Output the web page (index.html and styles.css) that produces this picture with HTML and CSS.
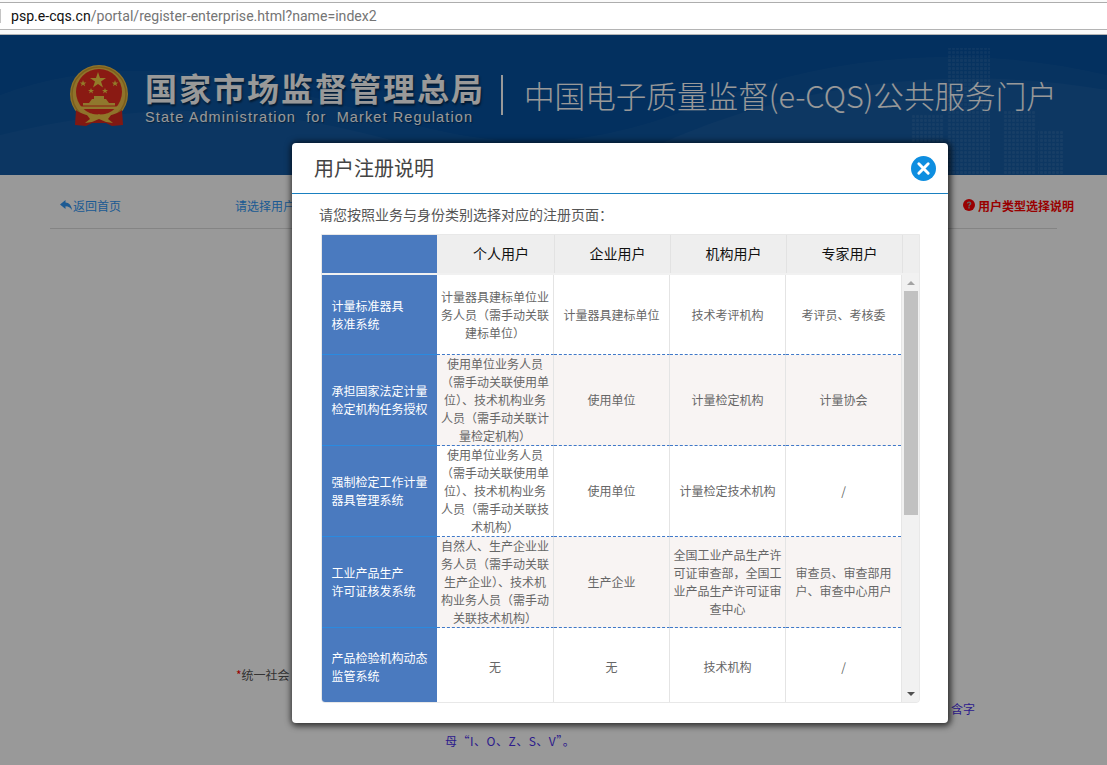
FILE: index.html
```html
<!DOCTYPE html>
<html lang="zh-CN">
<head>
<meta charset="utf-8">
<title>用户注册说明</title>
<link rel="stylesheet" href="styles.css">
</head>
<body>
<div class="page">
  <div class="browser-bar">
    <div class="address"><span class="host">psp.e-cqs.cn</span>/portal/register-enterprise.html?name=index2</div>
  </div>

  <header class="banner">
    <svg class="banner-art" viewBox="0 0 1107 140" preserveAspectRatio="none" aria-hidden="true">
      <defs>
        <pattern id="dots" width="4" height="4" patternUnits="userSpaceOnUse"><rect width="3" height="3" rx="1" fill="#fff"/></pattern>
      </defs>
      <path d="M0 60C120 15 240 40 360 75S560 125 700 70 980 10 1107 40V140H0Z" fill="#fff" opacity=".035"/>
      <path d="M600 140C720 70 900 20 1107 55V140Z" fill="#fff" opacity=".04"/>
      <path d="M0 100C160 60 300 70 470 130L500 140H0Z" fill="#fff" opacity=".03"/>
      <g fill="url(#dots)" opacity=".07">
        <rect x="947" y="13" width="43" height="127"/>
        <rect x="912" y="80" width="32" height="60"/>
        <rect x="1003" y="75" width="32" height="65"/>
        <rect x="1038" y="96" width="25" height="44"/>
      </g>
    </svg>
    <div class="brand">
      <svg class="emblem" viewBox="0 0 60 62" aria-hidden="true">
        <circle cx="30" cy="29" r="29" fill="#eec048"/>
        <circle cx="30" cy="29" r="27" fill="none" stroke="#cf9f30" stroke-width="1.500"/>
        <circle cx="30" cy="27" r="23" fill="#e62c20"/>
        <path d="M29 7l2 6h6l-5 3.600 2 6-5-3.700-5 3.700 2-6-5-3.600h6z" fill="#f5cf45"/>
        <path d="M14 15l.9 2.400h2.500l-2 1.500.8 2.400-2.200-1.500-2 1.500.7-2.400-2-1.500h2.500zM46 15l.9 2.400h2.500l-2 1.500.8 2.400-2.200-1.500-2 1.500.7-2.400-2-1.500h2.500zM22 23l.8 2h2.300l-1.800 1.300.7 2.200-2-1.400-1.900 1.400.7-2.200-1.800-1.300h2.200zM36 23l.8 2h2.300l-1.800 1.300.7 2.200-2-1.400-1.900 1.400.7-2.200-1.800-1.300h2.200z" fill="#f5cf45"/>
        <path d="M20 38l3-4h2v-3h10v3h2l3 4zM14 38h32v2.500H14zM11 41.500h38V44H11z" fill="#f1c94b"/>
        <path d="M7 45c6 5 14 6 23 6s17-1 23-6l1 15-11 1-6-3H23l-6 3-11-1z" fill="#d8281e"/>
        <path d="M18 50c4-3 8 1 12-1 4 2 8-2 12 1l-3 4 5 4-7-1-7-3-7 3-7 1 5-4z" fill="#f0c645"/>
      </svg>
      <div class="agency">
        <div class="agency-cn">国家市场监督管理总局</div>
        <div class="agency-en">State Administration&nbsp; for&nbsp; Market Regulation</div>
      </div>
      <div class="brand-rule"></div>
      <div class="portal-name">中国电子质量监督(e-CQS)公共服务门户</div>
    </div>
  </header>

  <nav class="subnav">
    <a class="back">
      <svg class="back-icon" viewBox="0 0 12 12" aria-hidden="true"><path d="M0 5.500L5.500 1v2.600C9 3.800 11.500 6.500 12 11 10.500 8.500 8.500 7.300 5.500 7.200V10z"/></svg>
      <span>返回首页</span>
    </a>
    <span class="choose">请选择用户</span>
    <a class="help">
      <svg class="help-icon" viewBox="0 0 12 12" aria-hidden="true"><circle cx="6" cy="6" r="6" fill="#f00"/><path d="M3.800 4.600C3.900 3.300 4.800 2.600 6.100 2.600c1.300 0 2.200.8 2.200 1.900 0 1.500-1.600 1.500-1.600 2.900H5.300C5.300 5.500 6.800 5.300 6.800 4.500c0-.4-.3-.7-.8-.7-.5 0-.8.3-.9.8zM5.300 8.100h1.400v1.300H5.300z" fill="#aaa"/></svg>
      <span>用户类型选择说明</span>
    </a>
  </nav>

  <section class="form-area">
    <div class="field-label"><span class="req">*</span>统一社会</div>
    <p class="hint">
      <span class="hint-first">含字</span>
      <span class="hint-second">母“I、O、Z、S、V”。</span>
    </p>
  </section>

  <div class="overlay">
    <div class="modal" role="dialog" aria-label="用户注册说明">
      <div class="modal-head">
        <h2 class="modal-title">用户注册说明</h2>
        <button class="close" aria-label="关闭">
          <svg viewBox="0 0 24 24" aria-hidden="true"><path d="M7.500 7.500l9 9M16.500 7.500l-9 9" stroke="#fff" stroke-width="2.800" stroke-linecap="round"/></svg>
        </button>
      </div>
      <div class="modal-body">
        <p class="intro">请您按照业务与身份类别选择对应的注册页面：</p>
        <div class="table-box">
          <table class="head-table">
            <thead>
              <tr>
                <th class="h-sys"></th>
                <th class="h-a">个人用户</th>
                <th class="h-b">企业用户</th>
                <th class="h-b">机构用户</th>
                <th class="h-b">专家用户</th>
                <th class="h-gap"></th>
              </tr>
            </thead>
          </table>
          <div class="body-row">
            <div class="body-clip">
              <table class="body-table">
                <tbody>
                  <tr class="r-short">
                    <th class="sys">计量标准器具<br>核准系统</th>
                    <td class="c-a">计量器具建标单位业务人员（需手动关联建标单位）</td>
                    <td class="c-b">计量器具建标单位</td>
                    <td class="c-b">技术考评机构</td>
                    <td class="c-e">考评员、考核委</td>
                  </tr>
                  <tr class="r-tint">
                    <th class="sys">承担国家法定计量<br>检定机构任务授权</th>
                    <td class="c-a">使用单位业务人员（需手动关联使用单位）、技术机构业务人员（需手动关联计量检定机构）</td>
                    <td class="c-b">使用单位</td>
                    <td class="c-b">计量检定机构</td>
                    <td class="c-e">计量协会</td>
                  </tr>
                  <tr>
                    <th class="sys">强制检定工作计量<br>器具管理系统</th>
                    <td class="c-a">使用单位业务人员（需手动关联使用单位）、技术机构业务人员（需手动关联技术机构）</td>
                    <td class="c-b">使用单位</td>
                    <td class="c-b">计量检定技术机构</td>
                    <td class="c-e">/</td>
                  </tr>
                  <tr class="r-tint">
                    <th class="sys">工业产品生产<br>许可证核发系统</th>
                    <td class="c-a">自然人、生产企业业务人员（需手动关联生产企业）、技术机构业务人员（需手动关联技术机构）</td>
                    <td class="c-b">生产企业</td>
                    <td class="c-b">全国工业产品生产许可证审查部，全国工业产品生产许可证审查中心</td>
                    <td class="c-e">审查员、审查部用户、审查中心用户</td>
                  </tr>
                  <tr class="r-last">
                    <th class="sys">产品检验机构动态<br>监管系统</th>
                    <td class="c-a">无</td>
                    <td class="c-b">无</td>
                    <td class="c-b">技术机构</td>
                    <td class="c-e">/</td>
                  </tr>
                </tbody>
              </table>
            </div>
            <div class="scrollbar" aria-hidden="true">
              <div class="sb-btn"><span class="arrow-up"></span></div>
              <div class="sb-track"><div class="sb-thumb"></div></div>
              <div class="sb-btn"><span class="arrow-down"></span></div>
            </div>
          </div>
        </div>
      </div>
    </div>
  </div>
</div>
</body>
</html>
```

FILE: styles.css
```css
* { box-sizing: border-box; }
html, body { margin: 0; padding: 0; height: 100%; overflow: hidden; background: #fff; }
body { font-family: "Noto Sans CJK SC", "Liberation Sans", sans-serif; font-size: 12px; color: #333; }
.page { position: relative; width: 1107px; height: 765px; overflow: hidden; }

/* browser chrome */
.browser-bar { height: 35px; padding-top: 2px; background: #fafafa; border-bottom: 1px solid #b4b4b4; }
.address { display: flex; align-items: center; height: 28px; background: #fff; border-top: 1px solid #adadad; border-bottom: 1px solid #b4b4b4; font-family: Roboto, "Liberation Sans", sans-serif; font-size: 14.100px; color: #757575; white-space: nowrap; }
.address::before { content: ""; width: 1px; height: 14px; margin-right: 10px; background: #c4c4c4; }
.host { color: #111; }

/* banner */
.banner { position: relative; height: 140px; background: #05509e; overflow: hidden; }
.banner-art { position: absolute; left: 0; top: 0; width: 100%; height: 100%; }
.brand { position: relative; display: flex; align-items: flex-start; padding: 30px 0 0 69px; }
.emblem { width: 60px; height: 62px; flex: none; }
.agency { width: 338px; flex: none; margin-left: 16px; margin-top: 2px; color: #fff; }
.agency-cn { font-size: 32px; font-weight: 700; letter-spacing: 2px; line-height: 40px; text-shadow: 1px 2px 2px rgba(0,0,0,.5); white-space: nowrap; }
.agency-en { font-family: "Liberation Sans", sans-serif; font-size: 14.500px; letter-spacing: 1.100px; line-height: 18px; margin-top: 1px; white-space: nowrap; text-shadow: 1px 1px 1px rgba(0,0,0,.4); }
.brand-rule { width: 2px; height: 40px; margin: 10px 21px 0 18px; background: #fff; flex: none; }
.portal-name { font-size: 30.600px; line-height: 44px; margin-top: 8px; color: #fff; font-weight: 300; white-space: nowrap; }

/* page under the dialog */
.subnav { display: flex; align-items: center; height: 54px; margin: 0 50px; padding: 7px 0 0 10px; border-bottom: 1px solid #ddd; }
.back { display: flex; align-items: center; gap: 1px; color: #2f97f5; }
.back-icon { width: 12px; height: 12px; fill: #2f97f5; }
.choose { margin-left: 114px; color: #2f97f5; }
.help { display: flex; align-items: center; gap: 3px; margin-left: auto; margin-right: -17px; font-weight: 700; color: #f00; }
.help-icon { width: 12px; height: 12px; }
.form-area { padding: 437px 0 0 236px; }
.field-label { line-height: 18px; color: #555; }
.req { color: #f00; }
.hint { width: 530px; margin: 9px 0 0 209px; line-height: 32px; color: #4a30ea; }
.hint-first { display: block; text-align: right; white-space: nowrap; }
.hint-second { display: block; letter-spacing: .5px; }

/* dialog */
.overlay { position: absolute; left: 0; right: 0; top: 35px; bottom: 0; background: rgba(0,0,0,.4); }
.modal { position: absolute; left: 292px; top: 108px; width: 656px; height: 580px; background: #fff; border-radius: 4px; box-shadow: 1px 1px 6px 2px rgba(0,0,0,.7); }
.modal-head { display: flex; align-items: center; justify-content: space-between; height: 51px; padding: 0 12px 0 22px; border-bottom: 1px solid #1a80c0; }
.modal-title { margin: 0; font-size: 20px; font-weight: 400; line-height: 28px; color: #444; }
.close { width: 25px; height: 25px; padding: 0; border: 0; border-radius: 50%; background: #0e8ee0; }
.close svg { display: block; width: 25px; height: 25px; }
.modal-body { padding: 10px 0 0 29px; }
.intro { margin: 0 0 10px -2px; font-size: 14px; line-height: 20px; color: #555; }

.table-box { width: 599px; border: 1px solid #e8e8e8; border-radius: 0 0 4px 4px; overflow: hidden; background: #f1f1f1; }
table { border-collapse: separate; border-spacing: 0; table-layout: fixed; }
.head-table { width: 597px; height: 38px; background: #eee; }
.head-table th { padding: 0 0 2px 10px; font-size: 14px; font-weight: 400; color: #111; border-right: 1px solid #e2e2e2; }
.head-table .h-sys { width: 116px; padding: 0; background: #4a7abf; border-right: 1px solid #eee; }
.h-a { width: 117px; }
.h-b { width: 116px; }
.head-table .h-gap { width: 16px; padding: 0; border-right: 0; }

.body-row { display: flex; height: 427px; margin-top: 2px; }
.body-clip { width: 579px; height: 427px; overflow: hidden; background: #fff; }
.body-table { width: 579px; color: #666; }
.body-table tr { height: 91px; }
.body-table tr.r-short { height: 80px; }
.body-table tr.r-last { height: 78px; }
.body-table tr.r-tint td { background: #f8f4f3; }
.body-table th, .body-table td { padding: 0 3px; font-size: 12px; font-weight: 400; line-height: 18px; text-align: center; vertical-align: middle; border-bottom: 1px dashed #3f78c8; border-right: 1px solid #e4e4e4; }
.body-table tr.r-last td, .body-table tr.r-last th { border-bottom: 0; }
.body-table .sys { width: 115px; padding: 0 0 0 9.500px; text-align: left; color: #fff; background: #4a7abf; border-right: 0; border-bottom: 1px solid #2a8ae0; }
.c-a { width: 117px; }
.c-b { width: 116px; }
.body-table .c-e { width: 115px; border-right: 0; }

.scrollbar { display: flex; flex-direction: column; width: 18px; background: #f1f1f1; border-left: 1px solid #e6e6e6; }
.sb-btn { display: flex; align-items: center; justify-content: center; height: 16px; flex: none; }
.sb-track { flex: 1; padding: 0 1px 0 2px; }
.sb-thumb { height: 224px; background: #c1c1c1; }
.arrow-up { width: 0; height: 0; border: 4px solid transparent; border-top: 0; border-bottom: 4px solid #a3a3a3; }
.arrow-down { width: 0; height: 0; border: 4px solid transparent; border-bottom: 0; border-top: 4px solid #505050; }
```
